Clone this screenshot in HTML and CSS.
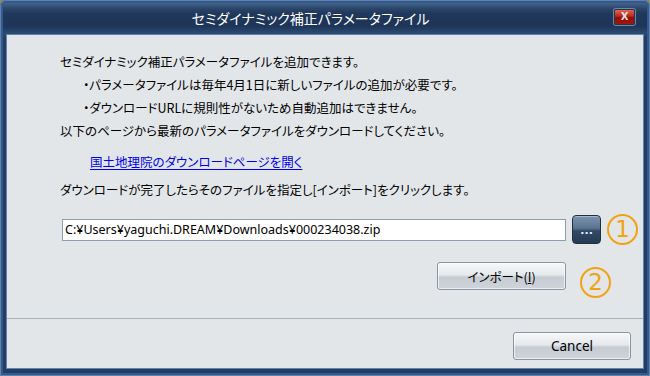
FILE: index.html
```html
<!DOCTYPE html>
<html lang="ja">
<head>
<meta charset="utf-8">
<title>セミダイナミック補正パラメータファイル</title>
<link rel="stylesheet" href="styles.css">
</head>
<body>
<div class="window">
  <div class="titlebar">
    <div class="title">セミダイナミック補正パラメータファイル</div>
    <div class="close"><span>X</span></div>
  </div>
  <div class="content">
    <div class="main">
      <p class="line">セミダイナミック補正パラメータファイルを追加できます。</p>
      <p class="line indent">・パラメータファイルは毎年4月1日に新しいファイルの追加が必要です。</p>
      <p class="line indent">・ダウンロードURLに規則性がないため自動追加はできません。</p>
      <p class="line">以下のページから最新のパラメータファイルをダウンロードしてください。</p>
      <p class="line linkline"><a class="link" href="#">国土地理院のダウンロードページを開く</a></p>
      <p class="line after-link">ダウンロードが完了したらそのファイルを指定し[インポート]をクリックします。</p>
      <div class="file-row">
        <div class="file-input">C:¥Users¥yaguchi.DREAM¥Downloads¥000234038.zip</div>
        <div class="browse"><span class="dots">...</span></div>
        <div class="step">1</div>
      </div>
      <div class="import-row">
        <div class="btn import">インポート(<u>I</u>)</div>
        <div class="step step2">2</div>
      </div>
    </div>
    <div class="footer">
      <div class="btn cancel">Cancel</div>
    </div>
  </div>
</div>
</body>
</html>
```

FILE: styles.css
```css
* { box-sizing: border-box; }
html, body { margin: 0; padding: 0; }
body {
  width: 650px;
  height: 376px;
  background: #8a8a5a;
  overflow: hidden;
  font-family: "Noto Sans CJK JP", sans-serif;
}
.window {
  width: 650px;
  height: 376px;
  display: flex;
  flex-direction: column;
  padding: 0 7px 8px 7px;
  border-radius: 6px 6px 0 0;
  background:
    linear-gradient(to bottom, #6c8fb8 0px, #43648c 3px, #2a4468 9px, #1f375a 14px, #1e3558 26px, #2b4a72 33px, #223c62 40px, #223c62 100%);
  box-shadow: inset 0 0 0 1px #5a83b4, inset 0 0 0 3px #34598a;
}
.titlebar {
  height: 35px;
  display: flex;
  align-items: center;
}
.title {
  flex: 1;
  text-align: center;
  color: #ffffff;
  font-size: 14px;
  font-feature-settings: "palt";
}
.close {
  width: 21px;
  height: 16px;
  margin-right: 8px;
  margin-bottom: 1px;
  border: 1px solid #2b3344;
  border-radius: 2px;
  background: linear-gradient(to bottom, #d86a5a 0%, #b8281c 45%, #8e0c06 55%, #a8160c 100%);
  box-shadow: 0 0 0 1px #6d87a8;
  display: flex;
  align-items: center;
  justify-content: center;
}
.close span {
  color: #f2dede;
  font-family: "DejaVu Sans", sans-serif;
  font-size: 10px;
  font-weight: bold;
  line-height: 1;
}
.content {
  flex: 1;
  background: #e3e6e9;
  display: flex;
  flex-direction: column;
  box-shadow: 0 0 0 1px #5f84b0;
}
.main {
  flex: 1;
  padding: 15px 5px 0 53px;
}
.line {
  margin: 0;
  font-size: 12.5px;
  line-height: 23px;
  height: 23px;
  color: #000;
  font-feature-settings: "palt";
  white-space: nowrap;
}
.indent { padding-left: 23px; }
.linkline { margin-top: 8px; padding-left: 30px; }
.after-link { margin-top: 5px; }
.link {
  color: #0000ee;
  text-decoration: underline;
  text-underline-offset: 2px;
}
.file-row {
  margin-top: 13px;
  margin-left: 2px;
  display: flex;
  align-items: center;
}
.file-input {
  width: 505px;
  height: 22px;
  background: #fff;
  border: 1px solid #8e9cab;
  padding: 0 2px;
  font-family: "Noto Sans", sans-serif;
  font-size: 12.5px;
  line-height: 20px;
  color: #000;
  white-space: nowrap;
}
.browse {
  width: 29px;
  height: 29px;
  margin-left: 6px;
  border: 1px solid #1f2e40;
  border-radius: 4px;
  background: linear-gradient(to bottom, #7b94ae 0%, #5a7490 45%, #324a66 55%, #253a54 100%);
  box-shadow: inset 0 1px 0 rgba(255,255,255,0.35);
  display: flex;
  align-items: center;
  justify-content: center;
}
.dots {
  color: #e6f0ff;
  font-family: "DejaVu Sans", sans-serif;
  font-size: 11px;
  font-weight: bold;
  line-height: 1;
  margin-top: 2px;
}
.step {
  width: 31px;
  height: 31px;
  margin-left: 6px;
  border: 2px solid #f0a310;
  border-radius: 50%;
  color: #f0a310;
  font-family: "DejaVu Sans", sans-serif;
  font-size: 23px;
  font-weight: normal;
  line-height: 27px;
  text-align: center;
}
.import-row {
  margin-top: 17px;
  padding-right: 27px;
  display: flex;
  justify-content: flex-end;
  align-items: flex-start;
}
.step2 {
  margin-left: 14px;
  margin-top: 5px;
}
.btn {
  height: 28px;
  border: 1px solid #8a95a2;
  border-radius: 3px;
  background: linear-gradient(to bottom, #f6f7f8 0%, #e6e9ec 45%, #c6ccd3 55%, #cfd4da 100%);
  box-shadow: inset 0 0 0 1px rgba(255,255,255,0.6);
  display: flex;
  align-items: center;
  justify-content: center;
  color: #000;
  font-size: 12.5px;
}
.import {
  width: 129px;
  font-feature-settings: "palt";
}
.import u { text-underline-offset: 1px; }
.footer {
  height: 50px;
  border-top: 1px solid #a7b1bc;
  display: flex;
  justify-content: flex-end;
  padding: 13px 12px 0 0;
}
.cancel {
  width: 118px;
  font-family: "Noto Sans", sans-serif;
  font-size: 13.5px;
}
```
